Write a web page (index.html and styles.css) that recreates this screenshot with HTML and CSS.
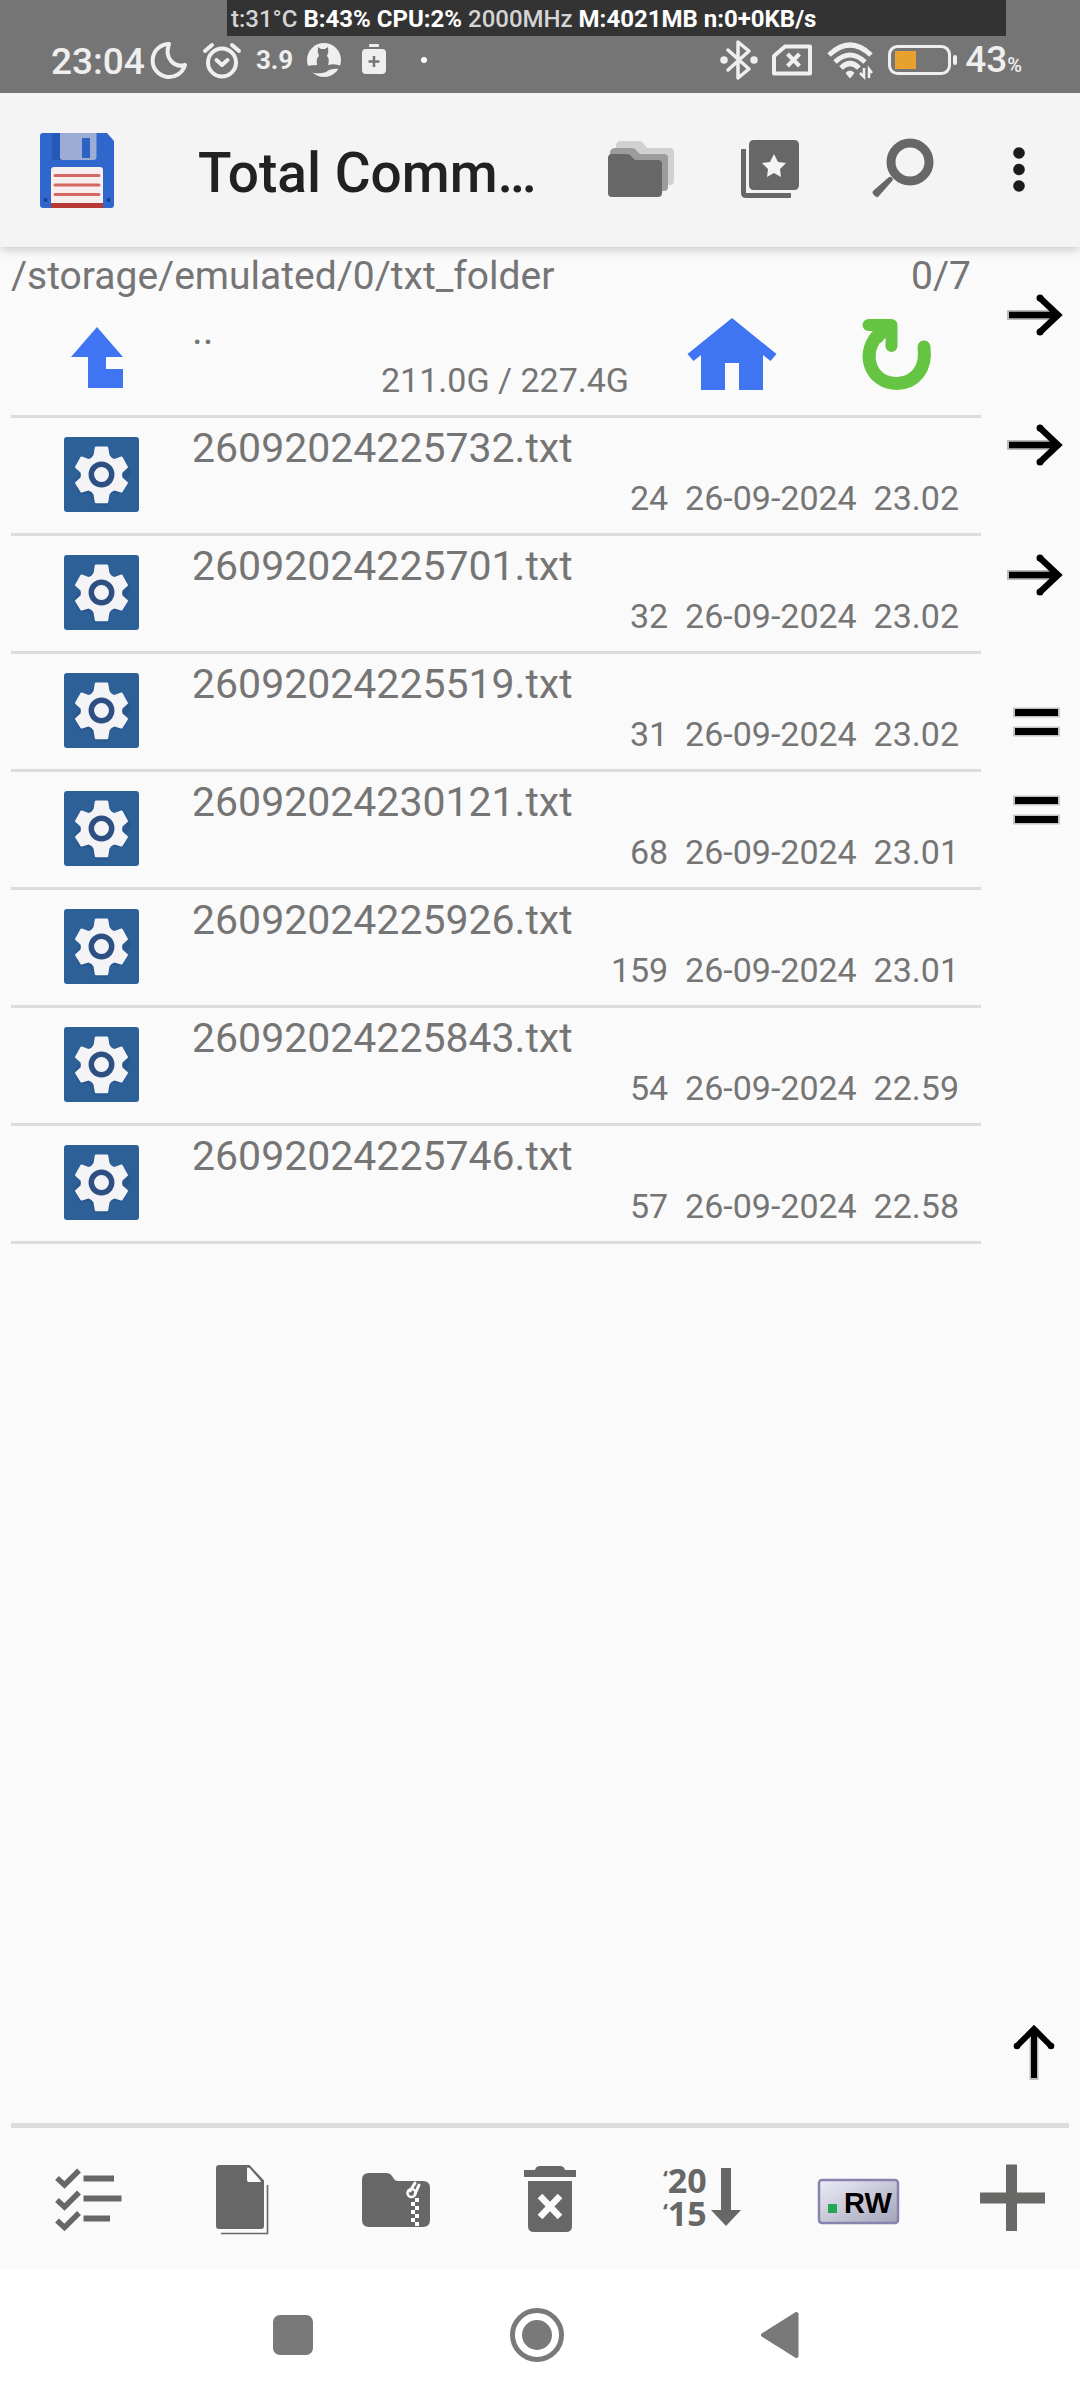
FILE: index.html
```html
<!DOCTYPE html>
<html lang="en">
<head>
<meta charset="utf-8">
<meta name="viewport" content="width=device-width, initial-scale=1">
<title>Total Commander</title>
<link rel="stylesheet" href="styles.css">
</head>
<body>
<svg class="symbols" aria-hidden="true">
  <symbol id="gear" viewBox="0 0 75 75">
    <rect width="75" height="75" rx="3" fill="#2c6096"/>
    <path d="M31 12h13l4 11 14 0 5 12-5 9-2 12-13 0-4 13-12-1-6-11-10 0-5-13z" fill="#28518a" opacity=".6"/>
    <path d="M32 9.500h11q1 0 1.200 1l1.300 7.500q1.500 3 5 4l6.500-2.500q1-.3 1.500.6l5.300 9.400q.5 1-.3 1.500l-5 4.500q-.8 2.500 0 5l5 4.500q.8.500.3 1.500l-5.300 8.500q-.5.800-1.500.5l-6.500-2q-3.500 1-5 4l-1.300 7.700q-.2 1-1.200 1h-11q-1 0-1.200-1l-1.300-7.700q-1.500-3-5-4l-6.500 2q-1 .3-1.500-.5l-5.300-8.500q-.5-1 .3-1.500l5-4.500q.8-2.500 0-5l-5-4.500q-.8-.5-.3-1.500l5.300-9.400q.5-.9 1.500-.6l6.500 2.500q3.500-1 5-4l1.300-7.500q.2-1 1.200-1z" fill="#f4f4f6"/>
    <circle cx="37.500" cy="37.500" r="10.200" fill="none" stroke="#2d4f82" stroke-width="5.500"/>
  </symbol>
  <symbol id="arrow" viewBox="0 0 60 60">
    <path d="M3 30h50" stroke="#bbb" stroke-width="10" fill="none"/>
    <path d="M5 30h48M36 13l18 17-18 17" stroke="#000" stroke-width="6.500" fill="none"/>
    <circle cx="36" cy="13" r="3.500"/><circle cx="36" cy="47" r="3.500"/>
  </symbol>
  <symbol id="equals" viewBox="0 0 60 60">
    <path d="M9 20.500h47M9 39.500h47" stroke="#c4c4c4" stroke-width="10"/>
    <path d="M11 20.500h43M11 39.500h43" stroke="#000" stroke-width="7"/>
  </symbol>
</svg>

<header class="status">
  <div class="monitor"><span class="dim">t:31°C</span> B:43% CPU:2% <span class="dim">2000MHz</span> M:4021MB n:0+0KB/s</div>
  <div class="status-group">
    <div class="clock">
      <time>23:04</time>
      <svg width="36" height="38" viewBox="0 0 36 38" fill="none" stroke="#efefef" stroke-width="4" stroke-linejoin="round"><path d="M17 3A16.500 16.500 0 1 0 33 24C22 27 12 17 17 3z"/></svg>
    </div>
    <svg width="40" height="38" viewBox="0 0 40 38" fill="none" stroke="#efefef" stroke-width="4" stroke-linecap="round" stroke-linejoin="round"><circle cx="20" cy="21.500" r="14"/><path d="M14.500 19l5.500 5 5.500-5M3 10l7-6M37 10l-7-6"/></svg>
    <span class="temp">3.9</span>
    <svg width="34" height="36" viewBox="0 0 34 36"><circle cx="17" cy="18" r="17" fill="#efefef"/><path d="M0 24q5-1 10-1-1-7 2-9-2-4-1-9l3 2h4l3-2q1 5-1 9 3 3 1 9 7-2 13 1l-1 3q-9-1-14 3-5 2-12 1-4 0-7-7z" fill="#757575"/></svg>
    <svg width="38" height="36" viewBox="0 0 38 36"><rect x="14" y="2" width="10" height="3" rx="1" fill="#efefef"/><rect x="7" y="7" width="24" height="25" rx="4" fill="#efefef"/><path d="M19 14v11M13.500 19.500h11" stroke="#757575" stroke-width="2.500"/></svg>
    <svg width="34" height="36" viewBox="0 0 34 36"><circle cx="17" cy="18" r="3" fill="#fff"/></svg>
  </div>
  <div class="status-group right">
    <svg width="36" height="40" viewBox="0 0 36 40" fill="none" stroke="#efefef" stroke-width="3.500" stroke-linecap="round" stroke-linejoin="round"><path d="M7 10l21 19-11 9V2l11 9L7 30"/><circle cx="3" cy="20" r="2"/><circle cx="33" cy="20" r="2"/></svg>
    <svg width="40" height="34" viewBox="0 0 40 34" fill="none" stroke="#efefef" stroke-width="4" stroke-linejoin="round"><path d="M13 3.500h25v27H2V13z"/><path d="M15.500 11l12 12M27.500 11l-12 12" stroke-width="4"/></svg>
    <svg width="46" height="38" viewBox="0 0 46 38" fill="none" stroke="#efefef" stroke-width="5"><path d="M2 14Q23-6 44 14M8 21Q23 7 38 21M14 27Q23 18 32 27"/><path d="M19 32q4-4 8 0l-4 5z" fill="#efefef" stroke-width="1"/><path d="M37 27v9l-4-4M42 37v-9l3 4" stroke-width="2.500"/></svg>
    <div class="battery">
      <svg width="70" height="32" viewBox="0 0 70 32"><rect x="1.500" y="2.500" width="60" height="27" rx="8" fill="none" stroke="#efefef" stroke-width="3"/><rect x="7" y="7" width="21" height="18" fill="#e6a22c"/><rect x="65" y="11" width="4" height="10" rx="2" fill="#efefef"/></svg>
      <span>43<small>%</small></span>
    </div>
  </div>
</header>

<div class="appbar">
  <svg class="floppy" width="74" height="75" viewBox="0 0 74 75">
    <path d="M3 0h64l7 8v64q0 3-3 3H3q-3 0-3-3V3q0-3 3-3z" fill="#2f67cd"/>
    <path d="M12 0h9v27h-6q-3 0-3-3z" fill="#2658b8"/>
    <path d="M20 0h36.500v24q0 3-3 3H23q-3 0-3-3z" fill="#9badd4"/>
    <rect x="42" y="5" width="8" height="20" fill="#2f60c4"/>
    <path d="M11 70V37q0-3 3-3h46q3 0 3 3v33z" fill="#f7eef0"/>
    <rect x="11" y="70" width="52" height="5" fill="#b83a34"/>
    <path d="M15 42.500h44M15 52h44M15 61.500h44" stroke="#d66863" stroke-width="3" stroke-linecap="round"/>
    <circle cx="5.500" cy="67" r="2" fill="#173f94"/><circle cx="68.500" cy="67" r="2" fill="#173f94"/>
  </svg>
  <h1>Total Comm…</h1>
  <div class="actions">
    <button aria-label="Folders"><svg width="76" height="76" viewBox="0 0 76 76"><path d="M14 13q1-4 5-4h18q3 0 5 3l3 4h23q4 0 4 4v29q0 4-4 4H14z" fill="#d1d1d1"/><path d="M8 20q1-4 5-4h17q3 0 5 3l3 3h24q4 0 4 4v29q0 4-4 4H8z" fill="#9c9c9c"/><path d="M6 26q0-4 4-4h15q3 0 5 3l3 3h23q4 0 4 4v29q0 4-4 4H10q-4 0-4-4z" fill="#676767"/></svg></button>
    <button aria-label="Bookmarks"><svg width="76" height="76" viewBox="0 0 76 76" fill="#676767"><path d="M9 18q0-1 1-1h4v44h45v4q0 1-1 1H14q-5 0-5-5z"/><path fill-rule="evenodd" d="M22 8h40q5 0 5 5v40q0 5-5 5H22q-5 0-5-5V13q0-5 5-5zM42 22l-4 8-8 1 6 6-1 8 7-4 7 4-1-8 6-6-8-1z"/></svg></button>
    <button aria-label="Search"><svg width="76" height="76" viewBox="0 0 76 76"><circle cx="48" cy="30" r="19" fill="none" stroke="#676767" stroke-width="9"/><path d="M27 45q3-1 4 3L16 65q-2 1-5-3-1-2 0-3z" fill="#676767"/></svg></button>
    <button class="more" aria-label="More options"><svg width="76" height="76" viewBox="0 0 76 76" fill="#1c1c1c"><circle cx="38" cy="21" r="5.800"/><circle cx="38" cy="37.500" r="5.800"/><circle cx="38" cy="54" r="5.800"/></svg></button>
  </div>
</div>

<main>
  <section class="panel">
    <div class="path"><span>/storage/emulated/0/txt_folder</span><span>0/7</span></div>
    <div class="row parent">
      <svg class="up" width="76" height="76" viewBox="0 0 76 76"><path d="M33 7l26 30H42v12h17v19H24V37H7z" fill="#3f75f3"/></svg>
      <div class="info"><span class="name">..</span><span class="meta">211.0G / 227.4G</span></div>
      <button aria-label="Home"><svg width="92" height="76" viewBox="0 0 92 76"><path d="M46 2l44.500 36-6 7L77 39v35H53V47H39v27H15V39l-7.500 6-6-7z" fill="#3f75f3"/></svg></button>
      <button aria-label="Refresh"><svg width="76" height="76" viewBox="0 0 76 76" fill="none" stroke="#66c443" stroke-width="13" stroke-linecap="round" stroke-linejoin="round"><path d="M65 31C68 53 56 67 38 67.500C13 67.500 1 40 18 20"/><path d="M9.500 9h23v21" stroke-width="12"/><path d="M17 12l13 3-9 10z" stroke-width="4" fill="#66c443"/></svg></button>
    </div>
    <ul>
      <li class="row"><svg class="ficon"><use href="#gear"/></svg><div class="info"><span class="name">26092024225732.txt</span><span class="meta">24  26-09-2024  23.02</span></div></li>
      <li class="row"><svg class="ficon"><use href="#gear"/></svg><div class="info"><span class="name">26092024225701.txt</span><span class="meta">32  26-09-2024  23.02</span></div></li>
      <li class="row"><svg class="ficon"><use href="#gear"/></svg><div class="info"><span class="name">26092024225519.txt</span><span class="meta">31  26-09-2024  23.02</span></div></li>
      <li class="row"><svg class="ficon"><use href="#gear"/></svg><div class="info"><span class="name">26092024230121.txt</span><span class="meta">68  26-09-2024  23.01</span></div></li>
      <li class="row"><svg class="ficon"><use href="#gear"/></svg><div class="info"><span class="name">26092024225926.txt</span><span class="meta">159  26-09-2024  23.01</span></div></li>
      <li class="row"><svg class="ficon"><use href="#gear"/></svg><div class="info"><span class="name">26092024225843.txt</span><span class="meta">54  26-09-2024  22.59</span></div></li>
      <li class="row"><svg class="ficon"><use href="#gear"/></svg><div class="info"><span class="name">26092024225746.txt</span><span class="meta">57  26-09-2024  22.58</span></div></li>
    </ul>
  </section>
  <aside class="side">
    <button aria-label="Copy to other panel"><svg><use href="#arrow"/></svg></button>
    <button aria-label="Move to other panel"><svg><use href="#arrow"/></svg></button>
    <button aria-label="Pack to other panel"><svg><use href="#arrow"/></svg></button>
    <div class="pair">
      <button aria-label="Same folder in other panel"><svg><use href="#equals"/></svg></button>
      <button aria-label="Same folder here"><svg><use href="#equals"/></svg></button>
    </div>
    <button class="top" aria-label="Go to top"><svg viewBox="0 0 60 60"><path d="M30 8v51" stroke="#bbb" stroke-width="9"/><path d="M30 8v49M13 25L30 8l17 17" stroke="#000" stroke-width="6" fill="none"/><circle cx="13" cy="25" r="3.300"/><circle cx="47" cy="25" r="3.300"/></svg></button>
  </aside>
</main>

<hr>
<div class="toolbar">
  <button aria-label="Select"><svg viewBox="0 0 76 76" fill="none" stroke="#676767"><path d="M7 17l7.500 7L29 9.500M7 39l7.500 7L29 31.500M7 59.500l7.500 7L29 52" stroke-width="5.500"/><path d="M33.500 17.500H64M33.500 37.500H71.500M33.500 57.500H60" stroke-width="6"/></svg></button>
  <button aria-label="Copy"><svg viewBox="0 0 76 76"><path fill-rule="evenodd" d="M15 4h30.500L60 19.500V65q0 3-3 3H15q-3 0-3-3V7q0-3 3-3zM43 8v11q0 2 2 2h11q2 0 0-2L46 7.500q-3-2-3 .5z" fill="#676767"/><path d="M17 72.500h46.500V24" fill="none" stroke="#676767" stroke-width="1.600"/></svg></button>
  <button aria-label="Pack"><svg viewBox="0 0 76 76"><path d="M4 19q0-7 7-7h17q4 0 6 3l2 3q1 2 4 2h25q7 0 7 7v32q0 7-7 7H11q-7 0-7-7z" fill="#676767"/><path d="M57 22l-5 8M61 24l-4 9" stroke="#fff" stroke-width="3" stroke-linecap="round"/><circle cx="53.500" cy="32" r="4" fill="none" stroke="#fff" stroke-width="2.500"/><path d="M57 37h4v4h-4zM53 41h4v4h-4zM57 45h4v4h-4zM53 49h4v4h-4zM57 53h4v4h-4zM53 57h4v4h-4zM57 61h4v4h-4z" fill="#fff"/></svg></button>
  <button aria-label="Delete"><svg viewBox="0 0 76 76"><path d="M12 9h11q1-4 5-4h20q4 0 5 4h11v7H12zM16 20h44v45q0 6-6 6H22q-6 0-6-6z" fill="#676767"/><path d="M28 35l20 21M48 35L28 56" stroke="#fafafa" stroke-width="6.500"/></svg></button>
  <button aria-label="Sort by date"><svg viewBox="0 0 76 76" fill="#676767"><text class="year" x="-3" y="32"><tspan class="quote" dy="-7">‘</tspan><tspan dy="7">20</tspan></text><text class="year" x="-3" y="65"><tspan class="quote" dy="-7">‘</tspan><tspan dy="7">15</tspan></text><path d="M55 7h10v42h10L60 65 45 49h10z"/></svg></button>
  <button aria-label="Read write"><svg viewBox="0 0 84 76"><defs><linearGradient id="key" x2="1" y2="1"><stop stop-color="#ececf8"/><stop offset="1" stop-color="#a4a4b8"/></linearGradient></defs><rect x="3" y="19" width="79" height="43" rx="3" fill="url(#key)" stroke="#8684ae" stroke-width="2.500"/><rect x="12" y="43" width="9" height="9" fill="#22a854"/><text class="rw" x="28" y="52">RW</text></svg></button>
  <button aria-label="Add button"><svg viewBox="0 0 76 76"><path d="M37.500 3.500V70M6 37h65" stroke="#686866" stroke-width="11"/></svg></button>
</div>

<nav>
  <button aria-label="Recent apps"><svg viewBox="0 0 60 60"><rect x="10" y="10" width="40" height="40" rx="7" fill="#797979"/></svg></button>
  <button aria-label="Home screen"><svg viewBox="0 0 60 60"><circle cx="30" cy="30" r="24.500" fill="none" stroke="#797979" stroke-width="5"/><circle cx="30" cy="30" r="15" fill="#797979"/></svg></button>
  <button aria-label="Back"><svg viewBox="0 0 60 60"><path d="M12 30L45.500 9v42z" fill="#797979" stroke="#797979" stroke-width="4" stroke-linejoin="round"/></svg></button>
</nav>
</body>
</html>
```
FILE: styles.css
```css
* { box-sizing: border-box; }

body {
  margin: 0;
  min-height: 100vh;
  display: flex;
  flex-direction: column;
  background: #fafafa;
  color: #757575;
  font-family: Roboto, "Liberation Sans", sans-serif;
}

svg { display: block; flex: none; overflow: visible; }
.symbols { position: absolute; width: 0; height: 0; }

button {
  display: flex;
  align-items: center;
  justify-content: center;
  padding: 0;
  border: 0;
  background: none;
  color: inherit;
  font: inherit;
}

/* System status bar */
.status {
  position: relative;
  display: flex;
  justify-content: space-between;
  height: 93px;
  padding: 36px 58px 9px 51px;
  background: #757575;
  color: #efefef;
}
.monitor {
  position: absolute;
  top: 0;
  left: 227px;
  right: 74px;
  height: 36px;
  padding-left: 4px;
  overflow: hidden;
  background: #333;
  color: #fff;
  font-size: 24px;
  font-weight: 700;
  line-height: 38px;
  white-space: nowrap;
}
.dim { color: #d4d4d4; font-weight: 500; }
.status-group { display: flex; align-items: center; gap: 14px; }
.status-group.right { gap: 15px; }
.clock, .battery {
  display: flex;
  align-items: center;
  gap: 7px;
  font-size: 37px;
  font-weight: 500;
  line-height: 48px;
}
.clock time, .battery span { padding-top: 4px; }
.battery small { font-size: 20px; }
.temp { font-size: 26px; font-weight: 700; }

/* Title bar */
.appbar {
  display: flex;
  align-items: center;
  height: 154px;
  padding: 0 7px 0 40px;
  background: #f4f4f4;
  box-shadow: 0 2px 10px rgba(0, 0, 0, .22);
}
.floppy { margin-right: 84px; }
h1 {
  flex: 1;
  margin: 0;
  padding-top: 5px;
  color: #212121;
  font-size: 55px;
  font-weight: 500;
  line-height: 64px;
  white-space: nowrap;
}
.actions { display: flex; }
.actions button { width: 130px; height: 154px; }
.actions .more { width: 108px; }

/* File panel and side buttons */
main { flex: 1; display: flex; }
.panel { flex: 1; min-width: 0; padding-left: 11px; }
.path {
  display: flex;
  justify-content: space-between;
  height: 53px;
  padding: 5px 10px 0 0;
  font-size: 39px;
  line-height: 48px;
}
ul { margin: 0; padding: 0; list-style: none; }
.row {
  display: grid;
  grid-template-columns: 181px 1fr;
  align-items: center;
  justify-items: center;
  height: 118px;
  border-bottom: 3px solid #dcdcdc;
}
.parent { grid-template-columns: 181px 1fr 165px 165px; }
.parent button { height: 100%; width: 100%; padding: 0 4px 7px 0; }
.ficon { width: 75px; height: 75px; margin-bottom: 2px; }
.info {
  display: flex;
  flex-direction: column;
  align-self: start;
  justify-self: stretch;
  gap: 7px;
  padding: 6px 22px 0 0;
}
.name { font-size: 41px; line-height: 48px; }
.meta {
  align-self: flex-end;
  font-size: 34px;
  line-height: 38px;
  white-space: pre;
}

.side {
  display: flex;
  flex-direction: column;
  width: 99px;
  padding: 3px 0 7px;
}
.side button { width: 100%; height: 130px; padding-left: 6px; }
.side svg { width: 60px; height: 60px; }
.side .pair { margin: 38px 0; }
.side .pair button { height: 88px; }
.side .top { margin-top: auto; }

/* Button bar */
hr {
  width: auto;
  height: 5px;
  margin: 0 11px;
  border: 0;
  background: #dcdcdc;
}
.toolbar {
  display: flex;
  justify-content: space-between;
  padding: 33px 30px 32px 50px;
}
.toolbar button { width: 76px; height: 76px; }
.toolbar svg { height: 76px; }
.year { font: 700 34px "Open Sans", "Noto Sans", sans-serif; }
.quote { font-size: 22px; }
.rw { font: 700 29px "Liberation Sans", sans-serif; fill: #000; }

/* System navigation */
nav {
  display: flex;
  justify-content: center;
  gap: 184px;
  height: 131px;
  padding-right: 6px;
  background: #fff;
}
nav svg { width: 60px; height: 60px; }
```
